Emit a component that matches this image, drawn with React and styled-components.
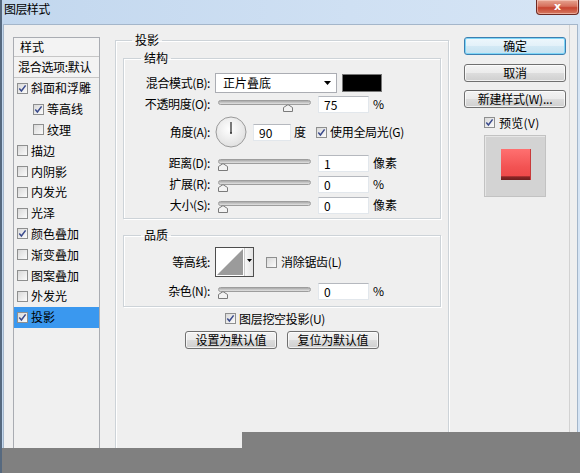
import React from 'react';
import styled, { createGlobalStyle } from 'styled-components';

const Global = createGlobalStyle`
  html, body { margin: 0; padding: 0; background: #808080; }
  body {
    font-family: "Noto Sans CJK SC", "Noto Sans", sans-serif;
    font-size: 12px;
    color: #000;
  }
  * { box-sizing: border-box; }
`;

const Window = styled.div`
  position: relative;
  width: 580px;
  height: 473px;
  overflow: hidden;
  display: flex;
  flex-direction: column;
  border-left: 2px solid #56697f;
  background: linear-gradient(to right, #c2d7ee, #cfe0f3 60%, #d6e5f5);
`;

const TitleBar = styled.div`
  height: 24px;
  flex-shrink: 0;
  display: flex;
  justify-content: space-between;
  align-items: flex-start;
  padding-left: 2px;
  padding-right: 1px;
`;

const Title = styled.div`
  font-size: 12px;
  line-height: 16px;
  padding-top: 1px;
  letter-spacing: -0.6px;
  color: #000;
`;

const Close = styled.div`
  width: 43px;
  height: 15px;
  border: 1px solid #6e2a22;
  border-top: none;
  border-radius: 0 0 4px 4px;
  background: linear-gradient(#e6a491 0%, #d6705c 45%, #c7442f 55%, #d57a62 100%);
  box-shadow: inset 0 0 0 1px rgba(255, 220, 210, 0.5);
  color: #fff;
  font-family: "DejaVu Sans", sans-serif;
  font-weight: bold;
  font-size: 11px;
  line-height: 14px;
  text-align: center;
`;

const Body = styled.div`
  flex: 1;
  margin-left: 1px;
  margin-right: 2px;
  border: 1px solid #a4b6ca;
  border-bottom: none;
  background: #efefef;
  display: flex;
  align-items: flex-start;
  overflow: hidden;
`;

/* ---------- left style list ---------- */
const List = styled.div`
  margin-left: 9px;
  margin-top: 12px;
  width: 87px;
  height: 440px;
  flex-shrink: 0;
  border: 1px solid #a9acb2;
  background: #f0f0f0;
`;

const ListHead = styled.div`
  height: ${p => p.$h}px;
  border-bottom: 1px solid #c6c6c6;
  padding-left: ${p => p.$pl}px;
  display: flex;
  align-items: center;
  background: #f3f3f3;
  white-space: nowrap;
  line-height: 16px;
  letter-spacing: ${p => p.$ls || 0}px;
`;

const ListItem = styled.div`
  height: 20.8px;
  display: flex;
  align-items: center;
  gap: 3px;
  padding-left: ${p => (p.$indent ? 19 : 3)}px;
  background: ${p => (p.$selected ? '#3a98ef' : 'transparent')};
  line-height: 16px;
  white-space: nowrap;
`;

/* ---------- checkbox ---------- */
const Box = styled.span`
  width: 11px;
  height: 11px;
  flex-shrink: 0;
  border: 1px solid #8e8f8f;
  background: linear-gradient(135deg, #d9d9d9, #fbfbfb);
  display: inline-flex;
  align-items: center;
  justify-content: center;
  margin-left: ${p => p.$ml || 0}px;
`;

function Check({ checked, ml }) {
  return (
    <Box $ml={ml}>
      {checked && (
        <svg width="9" height="9" viewBox="0 0 9 9">
          <path d="M1.3 4.6 L3.4 7 L7.6 1.4" fill="none" stroke="#3a4a8c" strokeWidth="1.5" />
        </svg>
      )}
    </Box>
  );
}

/* ---------- group boxes ---------- */
const Group = styled.fieldset`
  margin: ${p => p.$m};
  padding: ${p => p.$p};
  border: 1px solid #cdd3d8;
  box-shadow: inset 1px 1px 0 #fff, 1px 1px 0 #fff;
  min-width: 0;
  ${p => (p.$h ? `height: ${p.$h}px;` : '')}
  ${p => (p.$w ? `width: ${p.$w}px; flex-shrink: 0;` : '')}
`;

const Legend = styled.legend`
  margin-left: ${p => p.$ml}px;
  padding: 0 3px;
  font-size: 12px;
  line-height: 16px;
  height: 16px;
`;

const Row = styled.div`
  display: flex;
  align-items: center;
  height: ${p => p.$h}px;
  margin-top: ${p => p.$mt}px;
  white-space: nowrap;
`;

const Label = styled.div`
  width: 85px;
  flex-shrink: 0;
  text-align: right;
  line-height: 16px;
  letter-spacing: -0.4px;
`;

const Select = styled.div`
  margin-left: 5px;
  width: 122px;
  height: 20px;
  border: 1px solid #abadb3;
  background: #fff;
  display: flex;
  align-items: center;
  justify-content: space-between;
  padding: 0 5px 0 7px;
  line-height: 16px;
`;

const Swatch = styled.div`
  margin-left: 5px;
  width: 40px;
  height: 18px;
  background: #000;
  border: 1px solid #777;
`;

const SliderWrap = styled.div`
  position: relative;
  margin-left: 8px;
  width: 93px;
  height: 18px;
  flex-shrink: 0;
`;

const Track = styled.div`
  margin-top: 5px;
  height: 5px;
  border-radius: 3px;
  border: 1px solid #9d9d9d;
  background: linear-gradient(#a9a9a9, #e2e2e2);
`;

const Thumb = styled.svg`
  position: absolute;
  top: 9px;
`;

function Slider({ value }) {
  const left = Math.max(0, (93 * value) / 100 - 4.5);
  return (
    <SliderWrap>
      <Track />
      <Thumb width="10" height="8" viewBox="0 0 10 8" style={{ left }}>
        <path d="M0.5 7.5 V3.5 L5 0.6 L9.5 3.5 V7.5 Z" fill="#f3f3f3" stroke="#7a7a7a" />
      </Thumb>
    </SliderWrap>
  );
}

const Field = styled.div`
  margin-left: ${p => p.$ml}px;
  width: ${p => p.$w}px;
  height: 17px;
  flex-shrink: 0;
  background: #fff;
  border: 1px solid #e2e7ec;
  border-top-color: #b5b8be;
  padding-left: 5px;
  line-height: 15px;
  font-size: 12px;
`;

const Unit = styled.span`
  margin-left: ${p => p.$ml || 4}px;
  line-height: 16px;
`;

const Text = styled.span`
  margin-left: ${p => p.$ml || 0}px;
  line-height: 16px;
  letter-spacing: -0.3px;
`;

const Dial = styled.svg`
  margin-left: 5px;
  flex-shrink: 0;
`;

const Contour = styled.div`
  margin-left: 5px;
  width: 39px;
  height: 30px;
  border: 1px solid #4e4e4e;
  display: flex;
  background: #fff;
`;

const ContourArrow = styled.div`
  width: 9px;
  border-left: 1px solid #c9c9c9;
  background: linear-gradient(to right, #f7f7f7, #e4e4e4);
  display: flex;
  justify-content: center;
  padding-top: 11px;
`;

const KnockRow = styled.div`
  display: flex;
  align-items: center;
  gap: 3px;
  height: 16px;
  margin-top: 3px;
  margin-left: 102px;
  white-space: nowrap;
  letter-spacing: -0.3px;
`;

const ButtonRow = styled.div`
  display: flex;
  justify-content: center;
  gap: 10px;
  margin-top: 5px;
`;

const Button = styled.div`
  width: ${p => p.$w || 92}px;
  height: 18px;
  margin-top: ${p => p.$mt || 0}px;
  border: 1px solid ${p => (p.$default ? '#3c7fb1' : '#707070')};
  border-radius: 3px;
  background: ${p =>
    p.$default
      ? 'linear-gradient(#eef7fc 0%, #e3f1f9 49%, #d3e9f5 50%, #c6e2f1 100%)'
      : 'linear-gradient(#f3f3f3 0%, #ebebeb 49%, #dddddd 50%, #cfcfcf 100%)'};
  box-shadow: inset 0 0 0 1px ${p => (p.$default ? '#7fd6f7' : 'rgba(255,255,255,0.7)')};
  text-align: center;
  line-height: 16px;
  font-size: 12px;
  white-space: nowrap;
  letter-spacing: -0.2px;
`;

/* ---------- right column ---------- */
const RightCol = styled.div`
  margin-left: 15px;
  width: 106px;
  height: 440px;
  flex-shrink: 0;
  padding-top: 12px;
  padding-right: 3px;
  border-right: 1px solid #d2d2d2;
  display: flex;
  flex-direction: column;
`;

const PreviewRow = styled.div`
  display: flex;
  align-items: center;
  gap: 4px;
  height: 16px;
  margin-top: 6px;
  padding-left: 20px;
  letter-spacing: 0.3px;
`;

const PreviewBox = styled.div`
  margin-top: 5px;
  margin-left: 20px;
  width: 62px;
  height: 62px;
  padding: 13px 16px;
  background: #d3d3d3;
  border: 1px solid #c2c2c2;
  box-shadow: inset 1px 1px 0 #e6e6e6;
`;

const RedSquare = styled.div`
  width: 30px;
  height: 31px;
  background: linear-gradient(#ff7070 0%, #f25252 60%, #ee4a4a 88%, #8c2626 89%, #6e1e1e 100%);
  box-shadow: inset -1px 0 0 #c83a3a;
`;

/* ---------- overlays ---------- */
const Cover = styled.div`
  position: absolute;
  background: #808080;
  left: ${p => p.$l}px;
  top: ${p => p.$t}px;
  right: 0;
  bottom: 0;
`;

const styles = [
  ['斜面和浮雕', true, false],
  ['等高线', true, true],
  ['纹理', false, true],
  ['描边', false, false],
  ['内阴影', false, false],
  ['内发光', false, false],
  ['光泽', false, false],
  ['颜色叠加', true, false],
  ['渐变叠加', false, false],
  ['图案叠加', false, false],
  ['外发光', false, false],
  ['投影', true, false],
];

export default function App() {
  return (
    <>
      <Global />
      <Window>
        <TitleBar>
          <Title>图层样式</Title>
          <Close>x</Close>
        </TitleBar>
        <Body>
          <List>
            <ListHead $h={19} $pl={6}>样式</ListHead>
            <ListHead $h={21} $pl={4} $ls={-0.3}>混合选项:默认</ListHead>
            {styles.map(([name, checked, indent]) => (
              <ListItem key={name} $indent={indent} $selected={name === '投影'}>
                <Check checked={checked} />
                <span>{name}</span>
              </ListItem>
            ))}
          </List>

          <Group $m="7px 0 0 15px" $p="0 7px" $w={334} $h={440}>
            <Legend $ml={9}>投影</Legend>
            <Group $m="2px 0 0 0" $p="0 0 4px 1px">
              <Legend $ml={16}>结构</Legend>
              <Row $h={20} $mt={7}>
                <Label>混合模式(B):</Label>
                <Select>
                  <span>正片叠底</span>
                  <svg width="7" height="4" viewBox="0 0 7 4">
                    <path d="M0 0 H7 L3.5 4 Z" fill="#000" />
                  </svg>
                </Select>
                <Swatch />
              </Row>
              <Row $h={18} $mt={2}>
                <Label>不透明度(O):</Label>
                <Slider value={75} />
                <Field $ml={7} $w={51}>75</Field>
                <Unit>%</Unit>
              </Row>
              <Row $h={32} $mt={3}>
                <Label>角度(A):</Label>
                <Dial width="32" height="32" viewBox="0 0 32 32">
                  <defs>
                    <radialGradient id="dialg" cx="45%" cy="40%" r="65%">
                      <stop offset="0" stopColor="#ffffff" />
                      <stop offset="1" stopColor="#dedede" />
                    </radialGradient>
                  </defs>
                  <circle cx="16" cy="16" r="15" fill="url(#dialg)" stroke="#9a9a9a" />
                  <line x1="16" y1="17" x2="16" y2="6" stroke="#333" strokeWidth="1.3" />
                  <circle cx="16" cy="17" r="1" fill="#333" />
                </Dial>
                <Field $ml={6} $w={38}>90</Field>
                <Unit $ml={3}>度</Unit>
                <Check checked ml={10} />
                <Text $ml={3}>使用全局光(G)</Text>
              </Row>
              <Row $h={18} $mt={6}>
                <Label>距离(D):</Label>
                <Slider value={0} />
                <Field $ml={7} $w={51}>1</Field>
                <Unit>像素</Unit>
              </Row>
              <Row $h={18} $mt={3}>
                <Label>扩展(R):</Label>
                <Slider value={0} />
                <Field $ml={7} $w={51}>0</Field>
                <Unit>%</Unit>
              </Row>
              <Row $h={18} $mt={3}>
                <Label>大小(S):</Label>
                <Slider value={0} />
                <Field $ml={7} $w={51}>0</Field>
                <Unit>像素</Unit>
              </Row>
            </Group>

            <Group $m="8px 0 0 0" $p="0 0 6px 1px">
              <Legend $ml={16}>品质</Legend>
              <Row $h={30} $mt={4}>
                <Label>等高线:</Label>
                <Contour>
                  <svg width="28" height="28" viewBox="0 0 28 28">
                    <rect x="0.5" y="0.5" width="27" height="27" fill="#fff" stroke="#fff" />
                    <polygon points="1,27 27,1 27,27" fill="#9b9b9b" />
                  </svg>
                  <ContourArrow>
                    <svg width="5" height="3" viewBox="0 0 5 3">
                      <path d="M0 0 H5 L2.5 3 Z" fill="#000" />
                    </svg>
                  </ContourArrow>
                </Contour>
                <Check checked={false} ml={12} />
                <Text $ml={4}>消除锯齿(L)</Text>
              </Row>
              <Row $h={18} $mt={5}>
                <Label>杂色(N):</Label>
                <Slider value={0} />
                <Field $ml={7} $w={51}>0</Field>
                <Unit>%</Unit>
              </Row>
            </Group>

            <KnockRow>
              <Check checked />
              <span>图层挖空投影(U)</span>
            </KnockRow>
            <ButtonRow>
              <Button>设置为默认值</Button>
              <Button>复位为默认值</Button>
            </ButtonRow>
          </Group>

          <RightCol>
            <Button $w={102} $default>确定</Button>
            <Button $w={102} $mt={9}>取消</Button>
            <Button $w={102} $mt={8}>新建样式(W)...</Button>
            <PreviewRow>
              <Check checked />
              <span>预览(V)</span>
            </PreviewRow>
            <PreviewBox>
              <RedSquare />
            </PreviewBox>
          </RightCol>
        </Body>
        <Cover $l={240} $t={432} />
        <Cover $l={0} $t={448} />
      </Window>
    </>
  );
}
